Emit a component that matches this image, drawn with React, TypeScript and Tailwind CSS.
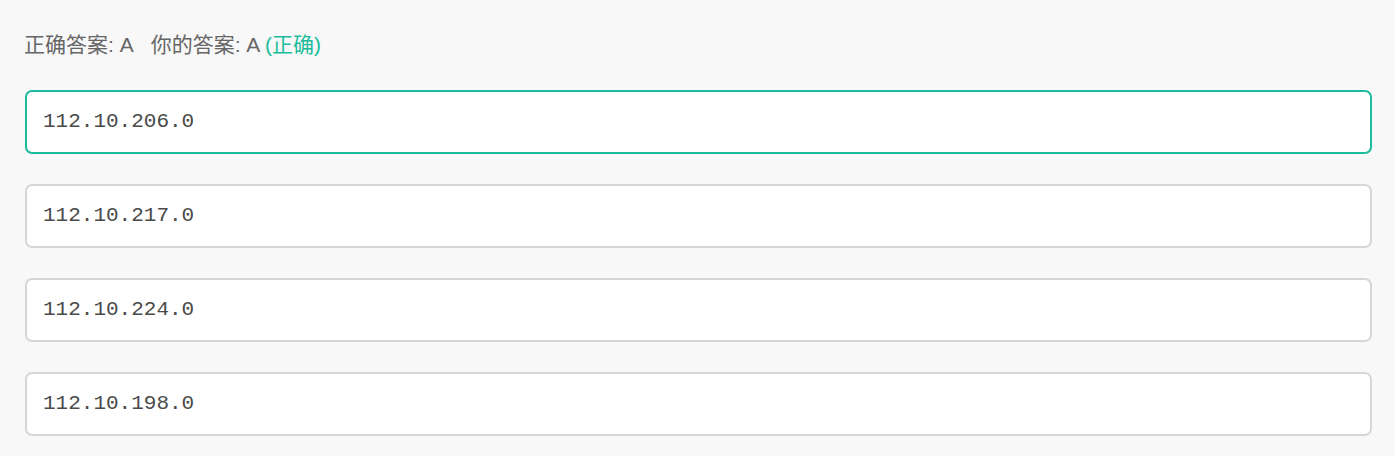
const options = ["112.10.206.0", "112.10.217.0", "112.10.224.0", "112.10.198.0"];

export default function App() {
  const correct = 0;

  return (
    <div className="min-h-[456px] bg-[#f8f8f8] pl-[25px] pr-[23px] pt-[33px] pb-[20px] font-['Liberation_Sans','Noto_Sans_CJK_SC',sans-serif]">
      {/* Result line */}
      <p className="-ml-[1px] text-[21px] leading-[24px] text-[#666]">
        正确答案: A<span className="ml-[17px]">你的答案: A</span>{" "}
        <span className="text-[#1abc9c]">(正确)</span>
      </p>

      {/* Options */}
      <div className="mt-[33px] flex flex-col gap-[30px]">
        {options.map((opt, i) => (
          <div
            key={opt}
            className={
              i === correct
                ? "flex h-[64px] items-center rounded-[7px] border-2 border-[#1abc9c] bg-white px-[16px]"
                : "flex h-[64px] items-center rounded-[7px] border-2 border-[#d6d6d6] bg-white px-[16px]"
            }
          >
            <span className="font-['Liberation_Mono',monospace] text-[21px] text-[#4a4a4a]">{opt}</span>
          </div>
        ))}
      </div>
    </div>
  );
}
